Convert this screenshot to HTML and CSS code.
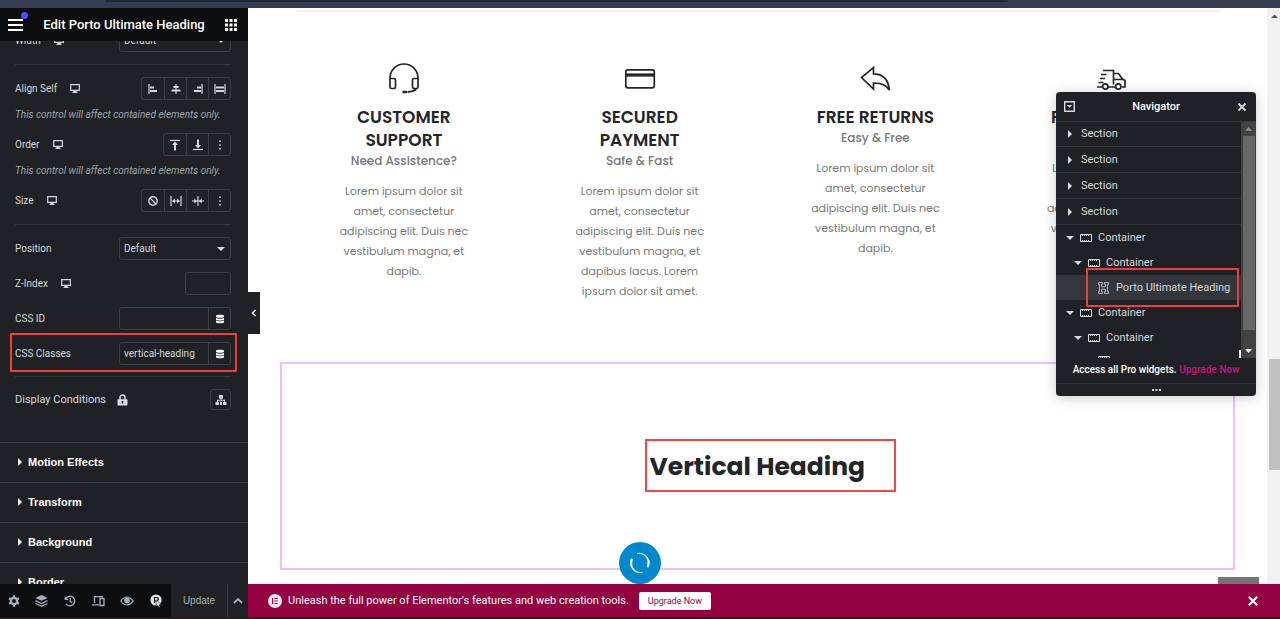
FILE: index.html
```html
<!DOCTYPE html>
<html lang="en">
<head>
  <meta charset="utf-8">
  <title>Edit Porto Ultimate Heading</title>
  <link rel="stylesheet" href="styles.css">
</head>
<body>
  <!-- shared icons -->
  <svg class="sprite" aria-hidden="true">
    <symbol id="i-desktop" viewBox="0 0 10 9"><path d="M.7.7h8.6v5.6H.7z" fill="none" stroke="currentColor" stroke-width="1.2"/><path d="M3.5 6.5h3v1.200h1V9h-5V7.700h1z"/></symbol>
    <symbol id="i-data" viewBox="0 0 10 10"><path d="M1 1.800C1 .4 9 .4 9 1.800v.9C9 4 1 4 1 2.700zM1 3.900c1.500 1 6.500 1 8 0v1.500c0 1.300-8 1.300-8 0zM1 6.600c1.500 1 6.500 1 8 0v1.600c0 1.500-8 1.500-8 0z"/></symbol>
    <symbol id="i-dots" viewBox="0 0 12 12"><path d="M5.200 1.500h1.600v1.600H5.200zM5.200 5.200h1.600v1.600H5.200zM5.200 8.900h1.600v1.600H5.200z"/></symbol>
    <symbol id="i-container" viewBox="0 0 12 8"><path d="M.5.5h11v7H.5z" fill="none" stroke="currentColor" stroke-width="1"/><path d="M2 1.500h8M2 6.500h8" stroke="currentColor" stroke-width="1" stroke-dasharray="1 1"/></symbol>
    <symbol id="i-right" viewBox="0 0 6 8"><path d="M1 0l4 4-4 4z"/></symbol>
    <symbol id="i-down" viewBox="0 0 8 6"><path d="M0 1h8L4 5z"/></symbol>
    <symbol id="i-close" viewBox="0 0 10 10"><path d="M1.500 1.500l7 7M8.500 1.500l-7 7" stroke="currentColor" stroke-width="1.800"/></symbol>
  </svg>

  <div class="browser-bar"><div class="browser-tab"></div></div>

  <div class="editor">
    <aside class="panel">
      <header class="panel-header">
        <button class="menu-button" aria-label="Menu">
          <svg width="15" height="12" viewBox="0 0 15 12"><path d="M0 1h15M0 6h15M0 11h15" stroke="currentColor" stroke-width="2"/></svg>
          <span class="notice-dot"></span>
        </button>
        <h1 class="panel-title">Edit Porto Ultimate Heading</h1>
        <button aria-label="Widgets">
          <svg width="12" height="12" viewBox="0 0 12 12"><path d="M0 0h3v3H0zM4.500 0h3v3h-3zM9 0h3v3H9zM0 4.500h3v3H0zM4.500 4.500h3v3h-3zM9 4.500h3v3H9zM0 9h3v3H0zM4.500 9h3v3h-3zM9 9h3v3H9z"/></svg>
        </button>
      </header>

      <div class="panel-body">
        <div class="controls">
          <div class="control">
            <label for="width">Width</label>
            <svg class="device" width="10" height="9"><use href="#i-desktop"/></svg>
            <div class="select-wrap">
              <select id="width"><option>Default</option></select>
              <svg width="8" height="6"><use href="#i-down"/></svg>
            </div>
          </div>
          <hr>
          <div class="control">
            <span>Align Self</span>
            <svg class="device" width="10" height="9"><use href="#i-desktop"/></svg>
            <div class="choices">
              <button aria-label="Start"><svg width="12" height="12" viewBox="0 0 12 12"><path d="M2 1v10" class="line"/><path d="M3 3.500h4v2H3zM3 7h7v2H3z"/></svg></button>
              <button aria-label="Center"><svg width="12" height="12" viewBox="0 0 12 12"><path d="M6 1v10" class="line"/><path d="M3.500 3h5v2h-5zM1.500 6.500h9v2h-9z"/></svg></button>
              <button aria-label="End"><svg width="12" height="12" viewBox="0 0 12 12"><path d="M10 1v10" class="line"/><path d="M5 3.500h4v2H5zM2 7h7v2H2z"/></svg></button>
              <button aria-label="Stretch"><svg width="12" height="12" viewBox="0 0 12 12"><path d="M1 1v10M11 1v10" class="line"/><path d="M2 3.500h8v2H2zM2 7h8v2H2z"/></svg></button>
            </div>
          </div>
          <p class="description">This control will affect contained elements only.</p>
          <div class="control">
            <span>Order</span>
            <svg class="device" width="10" height="9"><use href="#i-desktop"/></svg>
            <div class="choices">
              <button aria-label="First"><svg width="12" height="12" viewBox="0 0 12 12"><path d="M1 1.500h10" class="line"/><path d="M6 2.500l3 3.500H7v5.500H5V6H3z"/></svg></button>
              <button aria-label="Last"><svg width="12" height="12" viewBox="0 0 12 12"><path d="M1 10.500h10" class="line"/><path d="M6 9.500L3 6h2V.5h2V6h2z"/></svg></button>
              <button aria-label="Custom order"><svg width="12" height="12"><use href="#i-dots"/></svg></button>
            </div>
          </div>
          <p class="description">This control will affect contained elements only.</p>
          <div class="control">
            <span>Size</span>
            <svg class="device" width="10" height="9"><use href="#i-desktop"/></svg>
            <div class="choices">
              <button aria-label="None"><svg width="12" height="12" viewBox="0 0 12 12"><circle cx="6" cy="6" r="4.200" fill="none" stroke="currentColor" stroke-width="1.400"/><path d="M3 3l6 6" class="line"/></svg></button>
              <button aria-label="Grow"><svg width="12" height="12" viewBox="0 0 12 12"><path d="M1 1v10M11 1v10M3 6h6" class="line"/><path d="M2 6l3-2.500v5zM10 6L7 3.500v5z"/></svg></button>
              <button aria-label="Shrink"><svg width="12" height="12" viewBox="0 0 12 12"><path d="M6 1v10M0 6h12" class="line"/><path d="M5 6L2.300 3.400v5.200zM7 6l2.700-2.600v5.200z"/></svg></button>
              <button aria-label="Custom size"><svg width="12" height="12"><use href="#i-dots"/></svg></button>
            </div>
          </div>
          <hr>
          <div class="control-list">
            <div class="control">
              <label for="position">Position</label>
              <div class="select-wrap">
                <select id="position"><option>Default</option></select>
                <svg width="8" height="6"><use href="#i-down"/></svg>
              </div>
            </div>
            <div class="control">
              <label for="z-index">Z-Index</label>
              <svg class="device" width="10" height="9"><use href="#i-desktop"/></svg>
              <input class="number" type="text" id="z-index">
            </div>
            <div class="control">
              <label for="css-id">CSS ID</label>
              <div class="dynamic">
                <input type="text" id="css-id">
                <button aria-label="Dynamic tags"><svg width="10" height="10"><use href="#i-data"/></svg></button>
              </div>
            </div>
            <div class="control highlighted">
              <label for="css-classes">CSS Classes</label>
              <div class="dynamic">
                <input type="text" id="css-classes" value="vertical-heading">
                <button aria-label="Dynamic tags"><svg width="10" height="10"><use href="#i-data"/></svg></button>
              </div>
            </div>
          </div>
          <hr class="tight">
          <div class="control display-control">
            <span>Display Conditions</span>
            <svg class="lock" width="11" height="12" viewBox="0 0 11 12"><path d="M3 6V3.600a2.500 2.500 0 0 1 5 0V6" fill="none" stroke="currentColor" stroke-width="1.500"/><path fill-rule="evenodd" d="M1 5.200h9q.5 0 .5.500v5q0 .8-.8.800H1.300q-.8 0-.8-.8v-5q0-.5.500-.5zM4.700 7v2.400h1.600V7z"/></svg>
            <button class="conditions" aria-label="Display conditions"><svg width="12" height="12" viewBox="0 0 12 12"><path d="M4 1h4v3.500H6.600v1.200H10V8h1.500v3H8V8h1V6.700H3V8h1v3H.5V8H2V5.700h3.400V4.500H4zM5 7.800h2V11H5z"/></svg></button>
          </div>
        </div>

        <button class="section-toggle"><svg width="6" height="8"><use href="#i-right"/></svg>Motion Effects</button>
        <button class="section-toggle"><svg width="6" height="8"><use href="#i-right"/></svg>Transform</button>
        <button class="section-toggle"><svg width="6" height="8"><use href="#i-right"/></svg>Background</button>
        <button class="section-toggle"><svg width="6" height="8"><use href="#i-right"/></svg>Border</button>
      </div>

      <footer class="panel-footer">
        <div class="tools">
          <button aria-label="Settings"><svg width="12" height="12" viewBox="0 0 12 12"><circle cx="6" cy="6" r="3.100" fill="none" stroke="currentColor" stroke-width="2.400"/><path d="M6 .3v2M6 9.700v2M1.100 3.200l1.600.9M9.300 7.900l1.600.9M1.100 8.800l1.600-.9M9.300 4.100l1.600-.9" stroke="currentColor" stroke-width="2.400"/></svg></button>
          <button aria-label="Structure"><svg width="13" height="12" viewBox="0 0 13 12"><path d="M6.500 0l6.200 2.900-6.200 2.900L.3 2.900z"/><path d="M.5 5.700l6 2.800 6-2.800M.5 8.500l6 2.800 6-2.800" fill="none" stroke="currentColor" stroke-width="1.300"/></svg></button>
          <button aria-label="History"><svg width="12" height="12" viewBox="0 0 12 12"><path d="M1.800 3.500A4.800 4.800 0 1 1 2 8.800M6.200 3v3.300l2 1.500" fill="none" stroke="currentColor" stroke-width="1.300"/><path d="M.6.900V5h4z"/></svg></button>
          <button aria-label="Responsive mode"><svg width="13" height="12" viewBox="0 0 13 12"><path d="M2.500 8V1.700H11M0 9.800h7M8 3.500h4v7H8z" fill="none" stroke="currentColor" stroke-width="1.300"/></svg></button>
          <button aria-label="Preview"><svg width="14" height="10" viewBox="0 0 14 10"><path d="M.8 5q5.800-8 12.400 0-6.600 8-12.400 0z" fill="none" stroke="currentColor" stroke-width="1.200"/><circle cx="7" cy="4.500" r="2.900"/></svg></button>
          <button class="current" aria-label="Porto tools"><svg width="13" height="14" viewBox="0 0 13 14"><circle cx="6" cy="6" r="5.600"/><path d="M4.500 9V3.500h2q2 0 2 1.500t-2 1.600h-1" fill="none" stroke="#0c0d0e" stroke-width="1.200"/><path d="M6.200 5.700v7l1.600-1.500 1 2.300 1.400-.6-1-2.200h2.200z" stroke="#0c0d0e" stroke-width=".6"/></svg></button>
        </div>
        <button class="update">Update</button>
        <button class="update-more" aria-label="Save options"><svg width="10" height="7" viewBox="0 0 10 7"><path d="M1 6l4-4 4 4" fill="none" stroke="currentColor" stroke-width="1.800"/></svg></button>
      </footer>
      <button class="collapse" aria-label="Hide panel"><svg width="6" height="8" viewBox="0 0 6 8"><path d="M4.500 1l-3 3 3 3" fill="none" stroke="currentColor" stroke-width="1.400"/></svg></button>
    </aside>

    <div class="main">
      <div class="preview">
        <div class="page">
          <hr class="page-rule">
          <div class="features">
            <div class="feature">
              <svg width="32" height="32" viewBox="0 0 32 32" class="outline"><path d="M2 17v-2a14 14 0 0 1 28 0v2M2 15.500h4q1.500 0 1.500 1.500v7q0 1.500-1.500 1.500H3.500Q2 25.500 2 24zM30 15.500h-4q-1.500 0-1.500 1.500v7q0 1.500 1.500 1.500h2.500q1.500 0 1.500-1.500zM28.500 25.500q-1 2-4 2.600l-5 1"/><path d="M14.500 29h4.500" stroke-width="2.500"/></svg>
              <h3>CUSTOMER SUPPORT</h3>
              <h4>Need Assistence?</h4>
              <p>Lorem ipsum dolor sit amet, consectetur adipiscing elit. Duis nec vestibulum magna, et dapib.</p>
            </div>
            <div class="feature">
              <svg width="32" height="32" viewBox="0 0 32 32" class="outline"><rect x="1.800" y="6.800" width="28.500" height="18" rx="2"/><path d="M2 12h28" stroke-width="3.200"/></svg>
              <h3>SECURED PAYMENT</h3>
              <h4>Safe &amp; Fast</h4>
              <p>Lorem ipsum dolor sit amet, consectetur adipiscing elit. Duis nec vestibulum magna, et dapibus lacus. Lorem ipsum dolor sit amet.</p>
            </div>
            <div class="feature">
              <svg width="32" height="32" viewBox="0 0 32 32" class="outline"><path d="M14.500 4.500v6.300q14.300 0 15.800 16.200-4-7.200-15.800-7v6L2.500 14.500z"/></svg>
              <h3>FREE RETURNS</h3>
              <h4>Easy &amp; Free</h4>
              <p>Lorem ipsum dolor sit amet, consectetur adipiscing elit. Duis nec vestibulum magna, et dapib.</p>
            </div>
            <div class="feature">
              <svg width="32" height="32" viewBox="0 0 32 32" class="outline"><path d="M8 7.500h10.500v14M18.500 10.500h5l4 5.500 2.500 1.500v6.500h-3M19 16.500h8.500M6 11.500h5.500M5 15.500h5M3.500 19.500h5M2 24h5.500M13 24h7.500"/><circle cx="10.300" cy="23.500" r="2.700"/><circle cx="23.300" cy="23.500" r="2.700"/></svg>
              <h3>FREE SHIPPING</h3>
              <h4>Fast &amp; Free</h4>
              <p>Lorem ipsum dolor sit amet, consectetur adipiscing elit. Duis nec vestibulum magna, et dapib.</p>
            </div>
          </div>
          <div class="heading-container">
            <h2 class="vertical-heading">Vertical Heading</h2>
          </div>
          <div class="loader"><svg width="22" height="22" viewBox="0 0 22 22"><path d="M8 1.500a10 10 0 0 1 11.800 13q-.7 1.200-1.500.3l.3-2.300A9 9 0 0 0 8 1.500zM13.500 20.500a10 10 0 0 1-11.700-13q.8-1.200 1.600-.3l-.3 2.300a9 9 0 0 0 10.400 11z" stroke="currentColor" stroke-width=".7"/></svg></div>
          <div class="to-top"></div>
        </div>
        <div class="page-scroll">
          <svg width="7" height="4" viewBox="0 0 7 4"><path d="M0 4h7L3.500.5z"/></svg>
          <div class="page-thumb"></div>
        </div>
      </div>

      <div class="promo">
        <svg width="14" height="14" viewBox="0 0 14 14"><circle cx="7" cy="7" r="7" fill="#fbe9f1"/><path d="M4.700 4v6M6.500 4.500h3.300M6.500 7h3.300M6.500 9.500h3.300" stroke="#93003f" stroke-width="1.200"/></svg>
        <span>Unleash the full power of Elementor's features and web creation tools.</span>
        <a href="#" class="promo-button">Upgrade Now</a>
        <button class="promo-close" aria-label="Close"><svg width="12" height="12" viewBox="0 0 10 10"><use href="#i-close"/></svg></button>
      </div>

      <div class="navigator">
        <header class="nav-header">
          <button aria-label="Expand all"><svg width="11" height="11" viewBox="0 0 11 11"><path d="M.7.7h9.600v9.600H.7z" fill="none" stroke="currentColor" stroke-width="1.400"/><path d="M2.700 4h5.600L5.500 6.800z"/></svg></button>
          <h2>Navigator</h2>
          <button aria-label="Close"><svg width="10" height="10"><use href="#i-close"/></svg></button>
        </header>
        <div class="nav-body">
          <div class="tree">
            <div class="node section"><svg width="6" height="8"><use href="#i-right"/></svg>Section</div>
            <div class="node section"><svg width="6" height="8"><use href="#i-right"/></svg>Section</div>
            <div class="node section"><svg width="6" height="8"><use href="#i-right"/></svg>Section</div>
            <div class="node section"><svg width="6" height="8"><use href="#i-right"/></svg>Section</div>
            <div class="node"><svg width="8" height="6"><use href="#i-down"/></svg><svg width="12" height="8"><use href="#i-container"/></svg>Container</div>
            <div class="node level-2"><svg width="8" height="6"><use href="#i-down"/></svg><svg width="12" height="8"><use href="#i-container"/></svg>Container</div>
            <div class="node level-3 selected"><svg width="11" height="12" viewBox="0 0 11 12"><path d="M.5.6h4v1.800h-1v2.400h4V2.400h-1V.6h4v1.800h-.9v7.200h.9v1.800h-4V9.600h1V7.200h-4v2.400h1v1.800h-4V9.600h.9V2.400H.5z" fill="none" stroke="currentColor" stroke-width=".8"/></svg>Porto Ultimate Heading</div>
            <div class="node"><svg width="8" height="6"><use href="#i-down"/></svg><svg width="12" height="8"><use href="#i-container"/></svg>Container</div>
            <div class="node level-2"><svg width="8" height="6"><use href="#i-down"/></svg><svg width="12" height="8"><use href="#i-container"/></svg>Container</div>
            <div class="node level-3 last"><svg width="12" height="8"><use href="#i-container"/></svg></div>
            <div class="caret"></div>
          </div>
          <div class="nav-scroll">
            <svg width="7" height="4" viewBox="0 0 7 4"><path d="M0 4h7L3.500 0z" fill="#8b8b8b"/></svg>
            <div class="nav-thumb"></div>
            <svg width="7" height="4" viewBox="0 0 7 4"><path d="M0 0h7L3.500 4z"/></svg>
          </div>
        </div>
        <div class="nav-promo">Access all Pro widgets. <a href="#">Upgrade Now</a></div>
        <div class="nav-handle"><svg width="9" height="2" viewBox="0 0 9 2"><path d="M0 0h2v2H0zM3.500 0h2v2h-2zM7 0h2v2H7z"/></svg></div>
      </div>
    </div>
  </div>

  <div class="taskbar"></div>
</body>
</html>
```

FILE: styles.css
```css
* {
  box-sizing: border-box;
}

body {
  margin: 0;
  height: 100vh;
  display: flex;
  flex-direction: column;
  overflow: hidden;
  background: #fff;
  font-family: Roboto, "Liberation Sans", sans-serif;
  font-size: 11px;
}

h1, h2, h3, h4, p {
  margin: 0;
}

button, input, select {
  font: inherit;
  color: inherit;
}

button {
  display: flex;
  align-items: center;
  justify-content: center;
  padding: 0;
  border: 0;
  background: none;
  cursor: pointer;
}

svg {
  display: block;
  flex: none;
  fill: currentColor;
}

.sprite {
  position: absolute;
  width: 0;
  height: 0;
}

.line {
  stroke: currentColor;
  stroke-width: 1.2;
}

.browser-bar {
  flex: none;
  height: 8px;
  padding: 0 272px 0 105px;
  background: #343d50;
}

.browser-tab {
  height: 2px;
  border-radius: 0 0 4px 4px;
  background: #1f2738;
}

.taskbar {
  flex: none;
  height: 2px;
  background: #2b1c16;
}

.editor {
  flex: 1;
  min-height: 0;
  display: flex;
}

/* left panel */
.panel {
  position: relative;
  z-index: 1;
  flex: none;
  width: 248px;
  display: flex;
  flex-direction: column;
  background: #1f2124;
  color: #d5d8dc;
}

.panel-header {
  position: relative;
  z-index: 1;
  flex: none;
  height: 33px;
  display: flex;
  align-items: center;
  justify-content: space-between;
  padding: 0 11px 0 8px;
  background: #0c0d0e;
  color: #fff;
}

.panel-title {
  font-size: 13px;
  font-weight: 500;
}

.menu-button {
  position: relative;
}

.notice-dot {
  position: absolute;
  top: -7px;
  right: -5px;
  width: 7px;
  height: 7px;
  border-radius: 50%;
  background: #524cff;
}

.panel-body {
  flex: 1;
  min-height: 0;
  overflow: hidden;
}

/* scrolled a little, so the first row is cut by the header */
.controls {
  margin-top: -12px;
  padding: 0 17px 31px 15px;
}

.control {
  position: relative;
  display: flex;
  align-items: center;
  height: 23px;
  font-size: 10px;
}

.display-control {
  font-size: 11px;
}

.control-list {
  display: flex;
  flex-direction: column;
  gap: 12px;
}

.controls hr {
  height: 1px;
  margin: 12px 0;
  border: 0;
  background: #33363b;
}

.controls hr.tight {
  margin: 11px 0;
}

.device {
  margin-left: 13px;
}

.lock {
  margin-left: 11px;
}

.select-wrap,
.dynamic,
.choices,
.number,
.conditions {
  margin-left: auto;
  height: 23px;
  border: 1px solid #3a3d42;
  border-radius: 3px;
  background: none;
}

.select-wrap {
  position: relative;
  width: 112px;
}

.select-wrap select {
  width: 100%;
  height: 100%;
  padding: 0 4px;
  border: 0;
  background: none;
  appearance: none;
}

.select-wrap select option {
  background: #1f2124;
}

.select-wrap svg {
  position: absolute;
  top: 8px;
  right: 5px;
  pointer-events: none;
}

.choices {
  display: flex;
}

.choices button {
  width: 22px;
}

.choices button:not(:first-child) {
  border-left: 1px solid #3a3d42;
}

.number {
  width: 46px;
  padding: 0 4px;
}

.dynamic {
  width: 112px;
  display: flex;
}

.dynamic input {
  flex: 1;
  min-width: 0;
  padding: 0 4px;
  border: 0;
  background: none;
}

.dynamic button {
  width: 22px;
  border-left: 1px solid #3a3d42;
  color: #fff;
}

.conditions {
  width: 21px;
  height: 21px;
}

.description {
  padding: 8px 0 11px;
  line-height: 14px;
  font-size: 10px;
  font-style: italic;
  color: #9da5ae;
}

.highlighted::after,
.selected::after {
  content: '';
  position: absolute;
  border: 2px solid #f43b3b;
  border-radius: 1px;
  pointer-events: none;
}

.highlighted::after {
  inset: -9px -6px -7px -5px;
}

.section-toggle {
  width: 100%;
  height: 40px;
  justify-content: flex-start;
  gap: 5px;
  padding: 0 0 2px 17px;
  border-top: 1px solid #3a3d42;
  color: #fff;
  font-family: "Liberation Sans", Arial, sans-serif;
  font-weight: 700;
}

.panel-footer {
  flex: none;
  height: 33px;
  display: flex;
  background: #1f2124;
  color: #a6b0ba;
}

.tools {
  flex: none;
  width: 171px;
  display: flex;
  justify-content: space-around;
  background: #0c0d0e;
}

.tools .current {
  color: #e6e8ea;
}

.update {
  flex: 1;
  font-family: "Liberation Sans", Arial, sans-serif;
  font-size: 10px;
}

.update-more {
  width: 21px;
  border-left: 1px solid #3a3d42;
}

.collapse {
  position: absolute;
  top: 284px;
  left: 100%;
  width: 12px;
  height: 42px;
  background: #1f2124;
  color: #fff;
}

/* preview */
.main {
  position: relative;
  flex: 1;
  min-width: 0;
  display: flex;
  flex-direction: column;
}

.preview {
  flex: 1;
  min-height: 0;
  display: flex;
}

.page {
  position: relative;
  flex: 1;
  overflow: hidden;
  padding: 2px 32px 0;
  font-family: Poppins, Inter, sans-serif;
  color: #222529;
}

.page-rule {
  height: 2px;
  margin: 0 15px;
  border: 0;
  background: #f4f4f4;
}

.features {
  display: grid;
  grid-template-columns: repeat(4, 1fr);
  padding: 51px 6px 0;
  height: 350px;
}

.feature {
  display: flex;
  flex-direction: column;
  align-items: center;
  padding: 0 46px;
  text-align: center;
}

.outline {
  fill: none;
  stroke: #222529;
  stroke-width: 1.7;
}

.feature h3 {
  margin-top: 11px;
  font-size: 17px;
  line-height: 23px;
  font-weight: 600;
}

.feature h4 {
  margin-bottom: 11px;
  font-size: 12px;
  line-height: 18px;
  font-weight: 500;
  color: #777;
}

.feature p {
  font-size: 11px;
  line-height: 20px;
  color: #777;
}

.heading-container {
  display: flex;
  justify-content: center;
  padding: 75px 0 76px 25px;
  border: 2px solid #efbdf9;
}

.vertical-heading {
  width: 251px;
  padding: 2px 3px 0;
  border: 2px solid #fa4444;
  font-size: 25px;
  line-height: 47px;
  font-weight: 700;
}

.loader {
  position: absolute;
  left: 0;
  right: 0;
  bottom: 0;
  width: 42px;
  height: 42px;
  margin: 0 auto;
  translate: -118px;
  display: flex;
  align-items: center;
  justify-content: center;
  border-radius: 50%;
  background: #0088cc;
  color: #fff;
}

.to-top {
  position: absolute;
  right: 8px;
  bottom: 0;
  width: 41px;
  height: 7px;
  background: #747474;
}

.page-scroll {
  width: 13px;
  padding: 6px 0 0 2px;
  background: #f1f1f1;
  color: #505050;
}

.page-scroll svg {
  margin: 0 auto;
}

.page-thumb {
  height: 111px;
  margin-top: 341px;
  background: #c1c1c1;
}

.promo {
  flex: none;
  height: 33px;
  display: flex;
  align-items: center;
  padding: 0 21px 0 20px;
  background: #93003f;
  color: #fff;
}

.promo span {
  margin: 0 10px 0 6px;
}

.promo-button {
  padding: 0 9px;
  border-radius: 2px;
  background: #fff;
  color: #93003f;
  font-size: 9px;
  line-height: 18px;
  text-decoration: none;
}

.promo-close {
  margin-left: auto;
}

/* floating navigator */
.navigator {
  position: absolute;
  top: 84px;
  right: 24px;
  width: 200px;
  border-radius: 4px;
  background: #1f2124;
  color: #d5d8dc;
  box-shadow: 0 2px 14px rgba(0, 0, 0, 0.2);
}

.nav-header {
  height: 29px;
  display: flex;
  align-items: center;
  justify-content: space-between;
  padding: 0 9px 0 8px;
}

.nav-header h2 {
  font-size: 11px;
  font-weight: 500;
  color: #fff;
}

.nav-body {
  height: 237px;
  display: flex;
  border-top: 1px solid #33363b;
}

.tree {
  position: relative;
  flex: 1;
  margin-top: -1px;
  overflow: hidden;
}

.node {
  position: relative;
  height: 25px;
  display: flex;
  align-items: center;
  gap: 6px;
  padding-left: 10px;
}

.section {
  height: 26px;
  gap: 8px;
  padding-left: 11px;
  border-bottom: 1px solid #33363b;
}

.level-2 {
  padding-left: 18px;
}

.level-3 {
  gap: 7px;
  padding-left: 42px;
}

.last {
  height: 20px;
}

.selected {
  background: #33363a;
}

.selected::after {
  inset: -7px 2px -7px 30px;
}

.caret {
  position: absolute;
  right: 0;
  bottom: 0;
  width: 2px;
  height: 8px;
  background: #fff;
}

.nav-scroll {
  width: 15px;
  display: flex;
  flex-direction: column;
  align-items: center;
  padding: 5px 0;
  background: #424242;
  color: #fff;
}

.nav-thumb {
  width: 12px;
  height: 194px;
  margin: 5px 0 auto;
  background: #686868;
}

.nav-promo {
  height: 25px;
  line-height: 24px;
  text-align: center;
  font-size: 10px;
  font-weight: 500;
  color: #fff;
}

.nav-promo a {
  color: #c9147c;
  text-decoration: none;
}

.nav-handle {
  height: 13px;
  display: flex;
  align-items: center;
  justify-content: center;
  border-top: 1px solid #33363b;
}
```
